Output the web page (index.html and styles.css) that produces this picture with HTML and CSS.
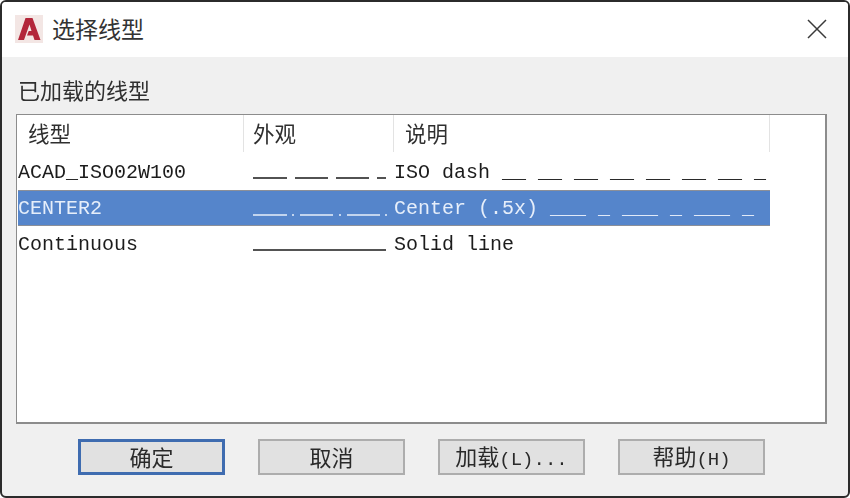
FILE: index.html
```html
<!DOCTYPE html>
<html lang="zh">
<head>
<meta charset="utf-8">
<title>选择线型</title>
<link rel="stylesheet" href="styles.css">
</head>
<body>
<div class="window">
  <header class="titlebar">
    <svg class="app-icon" width="28" height="28" viewBox="0 0 28 28">
      <rect width="28" height="28" fill="#f3e6e4"/>
      <path d="M3 25 L10.500 3 H17.500 L25.500 25 H19.500 L18 20.500 H12 L13.700 16 H16.500 L14.500 9.500 L9 25 Z" fill="#b3263a"/>
    </svg>
    <span class="title">选择线型</span>
    <svg class="close" width="20" height="20" viewBox="0 0 20 20">
      <path d="M1 1 L19 19 M19 1 L1 19" stroke="#3a3a3a" stroke-width="1.500" fill="none"/>
    </svg>
  </header>
  <main class="content">
    <div class="label">已加载的线型</div>
    <div class="list">
      <div class="head">
        <div class="hcell hcell-name">线型</div>
        <div class="hcell hcell-look">外观</div>
        <div class="hcell hcell-desc">说明</div>
      </div>
      <div class="row">
        <div class="cell-name">ACAD_ISO02W100</div>
        <div class="cell-look">
          <svg width="151" height="36" viewBox="0 0 151 36"><path d="M9 24 H43 M51 24 H84 M92 24 H125 M133 24 H142" stroke="#1a1a1a" stroke-width="1.500" fill="none"/></svg>
        </div>
        <div class="cell-desc">ISO dash __ __ __ __ __ __ __ _</div>
      </div>
      <div class="row selected">
        <div class="cell-name">CENTER2</div>
        <div class="cell-look">
          <svg width="151" height="36" viewBox="0 0 151 36"><path d="M9 24 H43 M48 24 H50 M56 24 H89 M95 24 H97 M103 24 H136 M141 24 H143" stroke="#e6eefa" stroke-width="1.500" fill="none"/></svg>
        </div>
        <div class="cell-desc">Center (.5x) ___ _ ___ _ ___ _</div>
      </div>
      <div class="row">
        <div class="cell-name">Continuous</div>
        <div class="cell-look">
          <svg width="151" height="36" viewBox="0 0 151 36"><path d="M9 24 H142" stroke="#1a1a1a" stroke-width="1.500" fill="none"/></svg>
        </div>
        <div class="cell-desc">Solid line</div>
      </div>
    </div>
    <div class="buttons">
      <button class="btn default">确定</button>
      <button class="btn">取消</button>
      <button class="btn">加载<span class="mono">(L)...</span></button>
      <button class="btn">帮助<span class="mono">(H)</span></button>
    </div>
  </main>
</div>
</body>
</html>
```
FILE: styles.css
```css
* { box-sizing: border-box; }
html, body { margin: 0; padding: 0; background: #fff; }
body { width: 850px; height: 498px; overflow: hidden; font-family: "Noto Sans CJK SC", "Liberation Sans", sans-serif; color: #2a2a2a; }
.window { width: 850px; height: 498px; border: 2px solid #2b2b2b; border-radius: 6px; display: flex; flex-direction: column; overflow: hidden; background: #f0f0f0; filter: blur(0.35px); }
.titlebar { height: 55px; background: #fff; display: flex; align-items: center; padding: 0 21px 2px 13px; flex: none; }
.app-icon { flex: none; }
.title { font-size: 23px; line-height: 28px; margin-left: 9px; margin-top: -2px; color: #333; }
.close { margin-left: auto; }
.content { flex: 1; padding: 17px 21px 0 14px; display: flex; flex-direction: column; }
.label { font-size: 22px; line-height: 30px; height: 40px; padding-left: 2px; color: #2f2f2f; }
.list { height: 310px; border: 2px solid #8c8c8c; border-width: 1.500px 2px 2px 1.500px; background: #fff; flex: none; font-family: "Liberation Mono", monospace; font-size: 20px; color: #1c1c1c; }
.head { display: grid; grid-template-columns: 227px 150px 376px; height: 37px; width: 753px; margin-bottom: 2px; }
.hcell { font-family: "Noto Sans CJK SC", sans-serif; font-size: 21.500px; line-height: 36px; border-right: 1.500px solid #e3e3e3; color: #2f2f2f; }
.hcell-name { padding-left: 11px; }
.hcell-look { padding-left: 9px; }
.hcell-desc { padding-left: 11px; }
.row { display: grid; grid-template-columns: 226px 150px 376px; width: 752px; height: 36px; margin-left: 1px; line-height: 34px; white-space: nowrap; }
.row > div { overflow: hidden; }
.cell-name, .cell-desc { padding-top: 2px; }
.cell-look svg { display: block; }
.selected { background: #5585cb; color: #e6eefa; border-top: 1.500px solid #8b8f98; border-bottom: 1.500px solid #8b8f98; line-height: 31px; }
.buttons { display: flex; gap: 33px; padding: 15px 0 0 62px; }
.btn { width: 147px; height: 36px; padding: 0 0 3px; background: #e1e1e1; border: 2px solid #adadad; font-family: "Noto Sans CJK SC", sans-serif; font-size: 22px; line-height: 28px; color: #2a2a2a; text-align: center; white-space: nowrap; }
.btn.default { border: 3px solid #3f6cb0; }
.mono { font-family: "Liberation Mono", monospace; font-size: 19px; }
```
